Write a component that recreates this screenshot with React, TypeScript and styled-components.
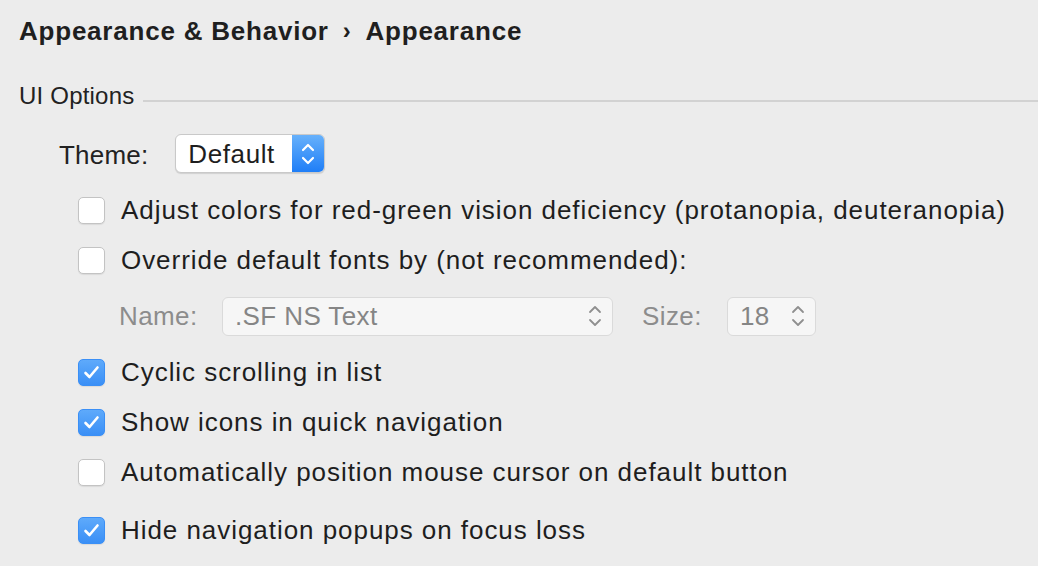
import React from 'react';
import styled, { createGlobalStyle } from 'styled-components';

const GlobalStyle = createGlobalStyle`
  html, body {
    margin: 0;
    padding: 0;
    background: #ececec;
  }
  body {
    font-family: "Liberation Sans", Arial, sans-serif;
    color: #222;
    -webkit-font-smoothing: antialiased;
  }
`;

const Page = styled.div`
  width: 1038px;
  height: 566px;
  overflow: hidden;
  padding-left: 19px;
  box-sizing: border-box;
`;

const Title = styled.h1`
  margin: 0;
  height: 62px;
  display: flex;
  align-items: center;
  font-size: 26px;
  font-weight: 700;
  letter-spacing: 0.78px;
  color: #1f1f1f;
  gap: 14px;
`;

const Crumb = styled.span`
  font-size: 24px;
  font-weight: 700;
`;

const SectionHeader = styled.div`
  height: 42px;
  margin-top: 13px;
  display: flex;
  align-items: center;
  font-size: 24px;
  letter-spacing: 0.2px;
  color: #222;
`;

const SectionLine = styled.div`
  flex: 1;
  height: 2px;
  background: #d2d2d2;
  margin-left: 9px;
  margin-top: 10px;
`;

const ThemeRow = styled.div`
  margin-top: 17px;
  padding-left: 40px;
  padding-top: 3px;
  height: 39px;
  box-sizing: border-box;
  display: flex;
  align-items: center;
  gap: 27px;
  font-size: 26px;
  letter-spacing: 0.2px;
`;

const Select = styled.div`
  width: 150px;
  height: 39px;
  margin-top: -3px;
  box-sizing: border-box;
  border-radius: 6px;
  background: #fff;
  border: 1px solid #c9c9c9;
  box-shadow: 0 1px 1px rgba(0, 0, 0, 0.12);
  display: flex;
  align-items: center;
  overflow: hidden;
`;

const SelectText = styled.span`
  flex: 1;
  padding-left: 12px;
  padding-top: 2px;
  font-size: 26px;
  letter-spacing: 0.6px;
  color: #1e1e1e;
`;

const SelectStepper = styled.div`
  width: 32px;
  height: 100%;
  background: linear-gradient(#67b1fb, #1f7ef7);
  display: flex;
  align-items: center;
  justify-content: center;
`;

const Options = styled.div`
  margin-top: 12px;
  padding-left: 59px;
`;

const Row = styled.label<{ $gap?: number }>`
  height: 50px;
  margin-top: ${p => p.$gap ?? 0}px;
  display: flex;
  align-items: center;
  gap: 16px;
  font-size: 26px;
  letter-spacing: 0.95px;
  color: #1e1e1e;
`;

const Box = styled.span<{ $checked?: boolean }>`
  width: 27px;
  height: 27px;
  box-sizing: border-box;
  border-radius: 5px;
  flex-shrink: 0;
  display: flex;
  align-items: center;
  justify-content: center;
  background: ${p => (p.$checked ? 'linear-gradient(#5eaafb, #3a8ff6)' : '#fff')};
  border: 1px solid ${p => (p.$checked ? '#3a8ff6' : '#c3c3c3')};
  box-shadow: 0 1px 1px rgba(0, 0, 0, 0.08);
`;

const FontRow = styled.div`
  height: 50px;
  margin-top: 6px;
  padding-left: 41px;
  display: flex;
  align-items: center;
  font-size: 26px;
  letter-spacing: 0.4px;
  color: #8c8c8c;
`;

const FieldLabel = styled.span<{ $w: number }>`
  width: ${p => p.$w}px;
  flex-shrink: 0;
`;

const Field = styled.div<{ $w: number }>`
  width: ${p => p.$w}px;
  height: 39px;
  box-sizing: border-box;
  border-radius: 6px;
  background: #f6f6f6;
  border: 1px solid #dadada;
  display: flex;
  align-items: center;
  padding: 0 10px 0 12px;
  margin-right: 29px;
  flex-shrink: 0;
`;

const FieldText = styled.span`
  flex: 1;
  color: #858585;
`;

const Chevrons = ({ color, w = 2 }: { color: string; w?: number }) => (
  <svg width="14" height="24" viewBox="0 0 14 24">
    <path d="M2 8 L7 3 L12 8" fill="none" stroke={color} strokeWidth={w} strokeLinecap="round" strokeLinejoin="round" />
    <path d="M2 16 L7 21 L12 16" fill="none" stroke={color} strokeWidth={w} strokeLinecap="round" strokeLinejoin="round" />
  </svg>
);

const Check = () => (
  <svg width="17" height="15" viewBox="0 0 17 15">
    <path d="M2.5 8 L6.5 12 L14.5 2.5" fill="none" stroke="#fff" strokeWidth="2.6" strokeLinecap="round" strokeLinejoin="round" />
  </svg>
);

const Option = ({ label, checked, gap }: { label: string; checked?: boolean; gap?: number }) => (
  <Row $gap={gap}>
    <Box $checked={checked}>{checked && <Check />}</Box>
    <span>{label}</span>
  </Row>
);

export default function App() {
  return (
    <Page>
      <GlobalStyle />
      <Title>
        <span>Appearance &amp; Behavior</span>
        <Crumb>›</Crumb>
        <span>Appearance</span>
      </Title>
      <SectionHeader>
        UI Options
        <SectionLine />
      </SectionHeader>
      <ThemeRow>
        <span>Theme:</span>
        <Select>
          <SelectText>Default</SelectText>
          <SelectStepper>
            <Chevrons color="#fff" w={2.2} />
          </SelectStepper>
        </Select>
      </ThemeRow>
      <Options>
        <Option label="Adjust colors for red-green vision deficiency (protanopia, deuteranopia)" />
        <Option label="Override default fonts by (not recommended):" />
        <FontRow>
          <FieldLabel $w={103}>Name:</FieldLabel>
          <Field $w={391}>
            <FieldText>.SF NS Text</FieldText>
            <Chevrons color="#8f8f8f" w={1.8} />
          </Field>
          <FieldLabel $w={85}>Size:</FieldLabel>
          <Field $w={89}>
            <FieldText>18</FieldText>
            <Chevrons color="#8f8f8f" w={1.8} />
          </Field>
        </FontRow>
        <Option label="Cyclic scrolling in list" checked gap={6} />
        <Option label="Show icons in quick navigation" checked />
        <Option label="Automatically position mouse cursor on default button" />
        <Option label="Hide navigation popups on focus loss" checked gap={8} />
      </Options>
    </Page>
  );
}
